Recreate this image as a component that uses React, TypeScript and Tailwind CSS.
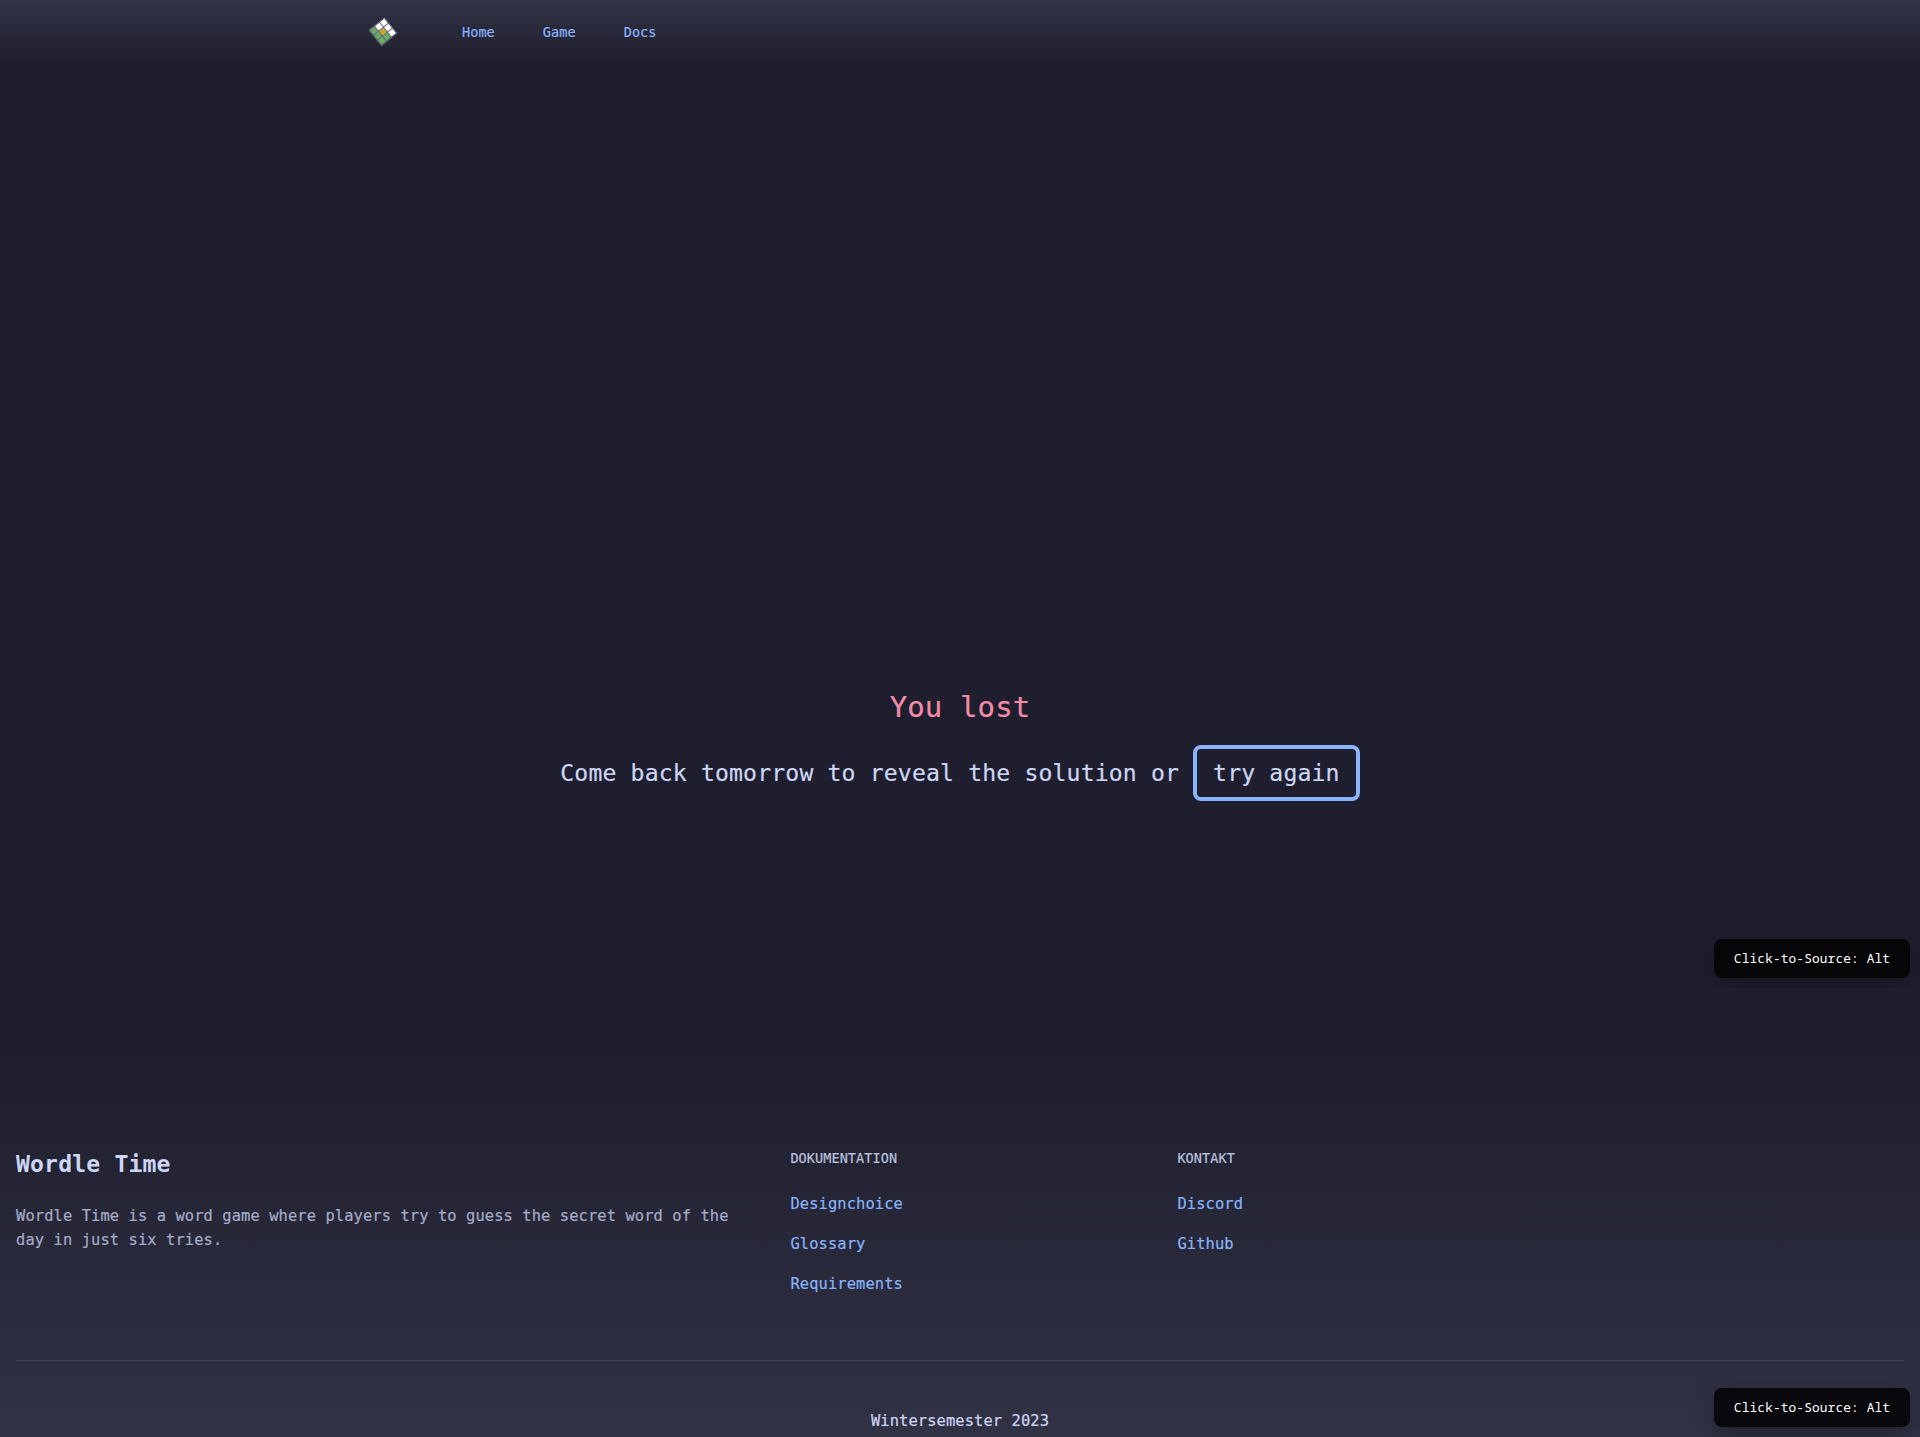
const cells = [
  ['#ffffff', '#ffffff', '#ffffff'],
  ['#ffffff', '#cfa935', '#6aaa64'],
  ['#6aaa64', '#6aaa64', '#6aaa64'],
];

function Logo() {
  return (
    <svg viewBox="0 0 30 30" className="size-[30px] overflow-visible">
      <g transform="translate(16.5 0) rotate(51)">
        <rect x="0" y="0" width="20.8" height="20.8" rx="0.6" fill="#62667a" />
        {cells.map((row, r) =>
          row.map((fill, c) => (
            <rect key={`${r}${c}`} x={1.3 + c * 6.4} y={1.3 + r * 6.4} width="5.4" height="5.4" rx="0.3" fill={fill} />
          )),
        )}
      </g>
    </svg>
  );
}

function Toast() {
  return (
    <div className='absolute right-2.5 bottom-2.5 flex h-[39px] w-[196px] items-center justify-center rounded-lg bg-black/80 font-["Noto_Sans_Mono","DejaVu_Sans_Mono",monospace] text-[12.85px] whitespace-nowrap text-white shadow-[0_8px_24px_rgba(0,0,0,0.3)] [-webkit-text-stroke:0px]'>
      Click-to-Source: Alt
    </div>
  );
}

function LinkColumn({ title, links }: { title: string; links: string[] }) {
  return (
    <div>
      <h3 className="text-[13.5px] leading-5 font-medium tracking-[0.08px] text-[#bac2de] uppercase">{title}</h3>
      <ul className="mt-6 flex flex-col gap-4">
        {links.map((l) => (
          <li key={l} className="leading-6 text-[#89b4fa]">
            <a href="#">{l}</a>
          </li>
        ))}
      </ul>
    </div>
  );
}

export default function App() {
  return (
    <div className='flex h-[1437px] flex-col overflow-hidden bg-[#1e1e2e] font-["DejaVu_Sans_Mono",monospace] text-[15.4px] tracking-[0.11px] text-[#cdd6f4] [-webkit-text-stroke:0.2px]'>
      <div className="relative flex h-[988px] flex-col overflow-hidden">
        <nav className="flex h-16 shrink-0 items-center bg-linear-to-b from-[#313244] to-[#1e1e2e] pl-[368px]">
          <Logo />
          <div className="ml-[64px] flex gap-12 text-[13.5px] tracking-[0.08px] text-[#89b4fa]">
            <a href="#">Home</a>
            <a href="#">Game</a>
            <a href="#">Docs</a>
          </div>
        </nav>
        <main className="flex flex-col items-center pt-[625px]">
          <h1 className="text-[29px] leading-9 tracking-[0.12px] text-[#f38ba8]">You lost</h1>
          <div className="mt-5 flex items-center gap-3.5 text-[23.1px] tracking-[0.16px]">
            <p>Come back tomorrow to reveal the solution or</p>
            <button className="h-14 rounded-lg border-4 border-[#89b4fa] px-4">try again</button>
          </div>
        </main>
        <Toast />
      </div>
      <footer className="relative mt-16 flex h-[385px] flex-col bg-linear-to-b from-[#1e1e2e] to-[#313244] px-4 pt-24">
        <div className="grid h-[212px] grid-cols-[774.4px_387px_1fr]">
          <div>
            <h2 className="text-[23.1px] leading-8 font-bold tracking-[0.156px] [-webkit-text-stroke:0px]">Wordle Time</h2>
            <p className="mt-6 w-[740px] leading-6 text-[#a6adc8]">
              Wordle Time is a word game where players try to guess the secret word of the day in just six tries.
            </p>
          </div>
          <LinkColumn title="Dokumentation" links={['Designchoice', 'Glossary', 'Requirements']} />
          <LinkColumn title="Kontakt" links={['Discord', 'Github']} />
        </div>
        <div className="border-t border-[#3a4453] pt-12 text-center leading-6">Wintersemester 2023</div>
        <Toast />
      </footer>
    </div>
  );
}
